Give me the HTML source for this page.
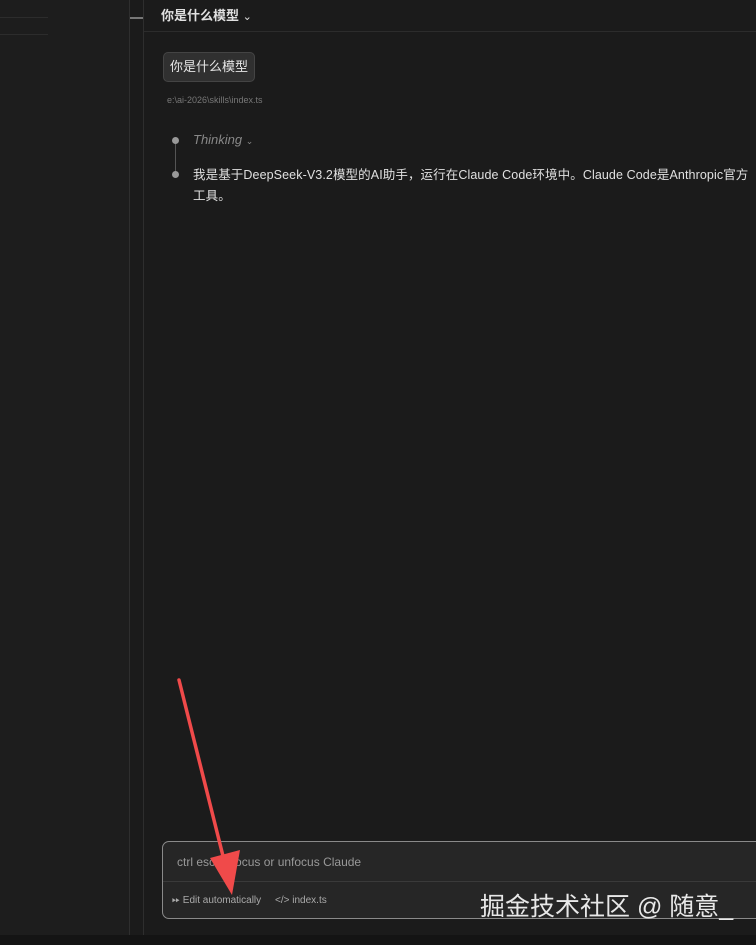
<!DOCTYPE html>
<html><head><meta charset="utf-8"><style>
*{margin:0;padding:0;box-sizing:border-box}
body{width:756px;height:945px;background:#1b1b1b;position:relative;overflow:hidden;font-family:"Liberation Sans","Noto Sans CJK SC",sans-serif;color:#ddd}
.abs{position:absolute}
</style></head><body>
<div class="abs" style="left:0;top:0;width:130px;height:935px;background:#1d1d1d"></div>
<div class="abs" style="left:0;top:17px;width:48px;height:1px;background:#2c2c2c"></div>
<div class="abs" style="left:0;top:34px;width:48px;height:1px;background:#2c2c2c"></div>
<div class="abs" style="left:129px;top:0;width:1px;height:935px;background:#2e2e2e"></div>
<div class="abs" style="left:130px;top:17px;width:13px;height:2px;background:#777"></div>
<div class="abs" style="left:143px;top:0;width:1px;height:935px;background:#2e2e2e"></div>
<div class="abs" style="left:144px;top:31px;width:612px;height:1px;background:#2c2c2c"></div>
<div class="abs" style="left:161px;top:5px;font-size:13px;font-weight:bold;color:#e0e0e0">你是什么模型 <span style="font-weight:normal;font-size:11px">⌄</span></div>
<div class="abs" style="left:163px;top:52px;width:92px;height:30px;background:#303030;border:1px solid #444;border-radius:5px;font-size:13px;line-height:28px;padding-left:6px;color:#e6e6e6">你是什么模型</div>
<div class="abs" style="left:167px;top:95px;font-size:9px;color:#777">e:\ai-2026\skills\index.ts</div>
<div class="abs" style="left:172px;top:137px;width:7px;height:7px;border-radius:50%;background:#999"></div>
<div class="abs" style="left:175px;top:144px;width:1px;height:28px;background:#555"></div>
<div class="abs" style="left:172px;top:171px;width:7px;height:7px;border-radius:50%;background:#999"></div>
<div class="abs" style="left:193px;top:132px;font-size:13px;font-style:italic;color:#888">Thinking <span style="font-size:9px;font-style:normal">⌄</span></div>
<div class="abs" style="left:193px;top:165px;width:700px;font-size:12.5px;line-height:21px;color:#e0e0e0;white-space:nowrap;letter-spacing:0.1px">我是基于DeepSeek-V3.2模型的AI助手，运行在Claude Code环境中。Claude Code是Anthropic官方<br>工具。</div>
<div class="abs" style="left:162px;top:841px;width:620px;height:78px;background:#262626;border:1px solid #8a8a8a;border-radius:7px"></div>
<div class="abs" style="left:163px;top:881px;width:600px;height:1px;background:#3a3a3a"></div>
<div class="abs" style="left:177px;top:855px;font-size:12px;color:#999">ctrl esc to focus or unfocus Claude</div>
<div class="abs" style="left:172px;top:895px;font-size:10px;color:#aaa">⏩︎ Edit automatically&nbsp;&nbsp;&nbsp;&nbsp;&nbsp;&lt;/&gt; index.ts</div>
<div class="abs" style="left:480px;top:887px;font-size:25px;color:#e8e8e8;white-space:nowrap">掘金技术社区 @ 随意_</div>
<div class="abs" style="left:0;top:935px;width:756px;height:10px;background:#141414"></div>
<svg class="abs" style="left:0;top:0" width="756" height="945"><line x1="179" y1="680" x2="224" y2="860" stroke="#f04a4a" stroke-width="3.5" stroke-linecap="round"/><polygon points="210,858 240,850 232,895" fill="#f04a4a"/></svg>
</body></html>
